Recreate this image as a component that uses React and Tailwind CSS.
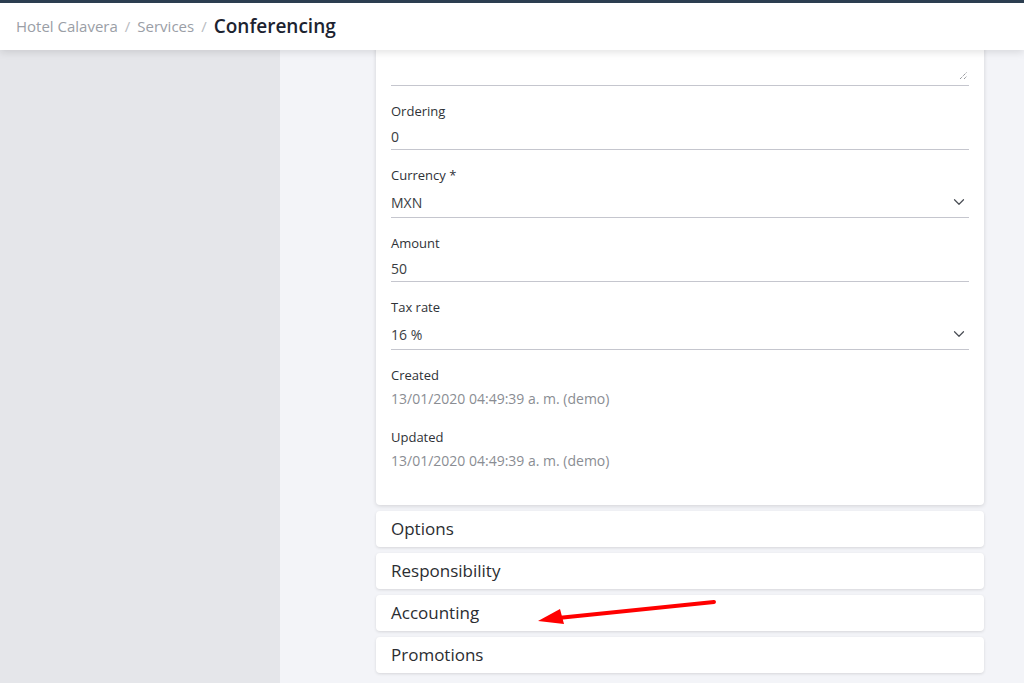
import { ChevronDown } from 'lucide-react';

const font = { fontFamily: '"Open Sans", "Liberation Sans", sans-serif' };

const Field = ({ label, value, select }) => (
  <div className="pt-[17px]">
    <div className="text-[13px] leading-4 text-[#2f3237]">{label}</div>
    <div
      className={`mt-1 flex items-center justify-between border-b border-[#c5c6ce] ${
        select ? 'h-[31px]' : 'h-[27px]'
      }`}
    >
      <span className="text-[14px] text-[#3a3d42]">{value}</span>
      {select && <ChevronDown size={18} strokeWidth={1.6} className="text-[#4a4e55] mr-[1px]" />}
    </div>
  </div>
);

const Info = ({ label, value }) => (
  <div className="pt-[17px]">
    <div className="text-[13px] leading-4 text-[#2f3237]">{label}</div>
    <div className="mt-[1px] h-[28px] flex items-center text-[14px] text-[#8a8d93]">{value}</div>
  </div>
);

const Section = ({ title }) => (
  <div className="h-[36px] bg-white rounded-[4px] shadow-[0_1px_3px_rgba(0,0,0,0.12)] flex items-center px-[15px]">
    <span className="text-[17px] font-medium text-[#2b2d31]">{title}</span>
  </div>
);

export default function App() {
  return (
    <div className="h-[683px] overflow-hidden flex flex-col bg-[#f3f4f8]" style={font}>
      <header className="relative z-10 h-[50px] shrink-0 bg-white border-t-[3px] border-[#2c3e50] shadow-[0_2px_8px_rgba(0,0,0,0.12)] flex items-center px-4 gap-[7px]">
        <span className="text-[15px] text-[#9a9ea6]">Hotel Calavera</span>
        <span className="text-[15px] text-[#b8bbc1]">/</span>
        <span className="text-[15px] text-[#9a9ea6]">Services</span>
        <span className="text-[15px] text-[#b8bbc1]">/</span>
        <span className="text-[19px] font-semibold text-[#1c2330]">Conferencing</span>
      </header>

      <div className="flex flex-1 min-h-0">
        <aside className="w-[280px] shrink-0 bg-[#e5e6ea]" />
        <main className="relative flex-1 pl-[96px] pr-[40px]">
          <div className="-mt-[60px] bg-white rounded-[4px] shadow-[0_1px_4px_rgba(0,0,0,0.14)] px-[15px] pb-[31px]">
            <div className="relative h-[96px] border-b border-[#c5c6ce]">
              {/* textarea resize grip */}
              <svg className="absolute right-[1px] bottom-[5px]" width="9" height="9" viewBox="0 0 9 9">
                <path d="M1 8 L8 1 M5 8 L8 5" stroke="#6b6e74" strokeWidth="1" strokeDasharray="1 1" />
              </svg>
            </div>
            <Field label="Ordering" value="0" />
            <Field label="Currency *" value="MXN" select />
            <Field label="Amount" value="50" />
            <Field label="Tax rate" value="16 %" select />
            <Info label="Created" value="13/01/2020 04:49:39 a. m. (demo)" />
            <Info label="Updated" value="13/01/2020 04:49:39 a. m. (demo)" />
          </div>

          <div className="mt-[6px] flex flex-col gap-[6px]">
            <Section title="Options" />
            <Section title="Responsibility" />
            <Section title="Accounting" />
            <Section title="Promotions" />
          </div>

          {/* red annotation arrow */}
          <svg className="absolute left-[250px] top-[540px]" width="200" height="40" viewBox="0 0 200 40">
            <line x1="184" y1="12" x2="28" y2="28" stroke="#ff0000" strokeWidth="4" strokeLinecap="round" />
            <polygon points="8,31 30,19 34,34" fill="#ff0000" />
          </svg>
        </main>
      </div>
    </div>
  );
}
